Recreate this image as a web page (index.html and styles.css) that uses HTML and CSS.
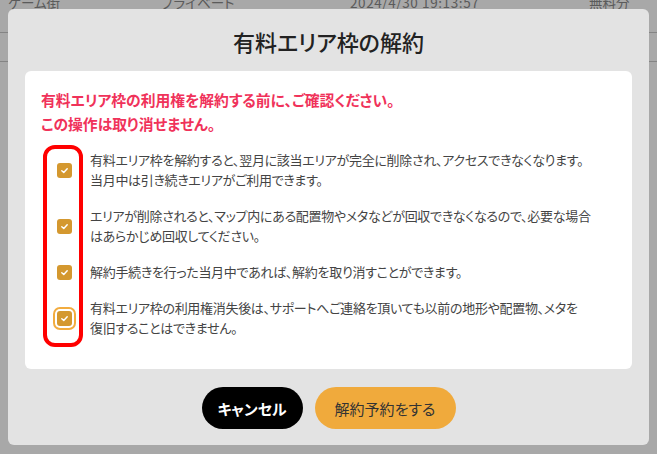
FILE: index.html
```html
<!DOCTYPE html>
<html lang="ja">
<head>
  <meta charset="UTF-8" />
  <meta name="viewport" content="width=device-width, initial-scale=1.0" />
  <title>有料エリア枠の解約</title>
  <link rel="stylesheet" href="styles.css">
</head>
<body>
  <table class="area-table">
    <tr>
      <td class="col-name">ゲーム街</td>
      <td class="col-type">プライベート</td>
      <td class="col-date">2024/4/30 19:13:57</td>
      <td class="col-plan">無料分</td>
    </tr>
    <tr>
      <td class="col-name"></td>
      <td class="col-type"></td>
      <td class="col-date"></td>
      <td class="col-plan"></td>
    </tr>
  </table>

  <div class="overlay">
    <div class="modal">
      <h2 class="modal-title">有料エリア枠の解約</h2>

      <div class="card">
        <p class="warning">有料エリア枠の利用権を解約する前に、ご確認ください。<br>この操作は取り消せません。</p>

        <ul class="checklist">
          <li>
            <span class="check">
              <svg viewBox="0 0 10 10" width="9" height="9"><path d="M2 5.2 L4.2 7.2 L8 3" /></svg>
            </span>
            <span class="check-text">有料エリア枠を解約すると、翌月に該当エリアが完全に削除され、アクセスできなくなります。<br>当月中は引き続きエリアがご利用できます。</span>
          </li>
          <li>
            <span class="check">
              <svg viewBox="0 0 10 10" width="9" height="9"><path d="M2 5.2 L4.2 7.2 L8 3" /></svg>
            </span>
            <span class="check-text">エリアが削除されると、マップ内にある配置物やメタなどが回収できなくなるので、必要な場合<br>はあらかじめ回収してください。</span>
          </li>
          <li>
            <span class="check">
              <svg viewBox="0 0 10 10" width="9" height="9"><path d="M2 5.2 L4.2 7.2 L8 3" /></svg>
            </span>
            <span class="check-text">解約手続きを行った当月中であれば、解約を取り消すことができます。</span>
          </li>
          <li>
            <span class="check focused">
              <svg viewBox="0 0 10 10" width="9" height="9"><path d="M2 5.2 L4.2 7.2 L8 3" /></svg>
            </span>
            <span class="check-text">有料エリア枠の利用権消失後は、サポートへご連絡を頂いても以前の地形や配置物、メタを<br>復旧することはできません。</span>
          </li>
        </ul>

        <div class="highlight"></div>
      </div>

      <div class="actions">
        <button class="btn btn-cancel">キャンセル</button>
        <button class="btn btn-primary">解約予約をする</button>
      </div>
    </div>
  </div>
</body>
</html>
```

FILE: styles.css
```css
body {
  margin: 0;
  background: #fff;
  font-family: "Noto Sans CJK JP", "Noto Sans", sans-serif;
  font-feature-settings: "palt";
  color: #333;
}

/* table behind the dialog */
.area-table {
  width: 657px;
  margin-top: -15px;
  border-collapse: collapse;
  table-layout: fixed;
  font-size: 13.5px;
  color: #8a8a8a;
}
.area-table td {
  box-sizing: border-box;
  padding: 8px 0 20px 8px;
  line-height: 19px;
  border-bottom: 1px solid #c8c8c8;
  white-space: nowrap;
  overflow: hidden;
}
.col-name { width: 153px; padding-left: 0; }
.col-type { width: 189px; }
.col-date { width: 239px; letter-spacing: 0.6px; }

/* dialog */
.overlay {
  position: fixed;
  inset: 0;
  background: rgba(0, 0, 0, 0.34);
  display: flex;
  align-items: center;
  justify-content: center;
}
.modal {
  width: 641px;
  box-sizing: border-box;
  padding: 16px 17px 16px;
  background: #e3e3e3;
  border-radius: 6px;
}
.modal-title {
  margin: 0 0 14px;
  font-size: 22px;
  line-height: 32px;
  font-weight: 500;
  text-align: center;
  color: #222;
}

.card {
  position: relative;
  background: #fff;
  border-radius: 6px;
  padding: 17px 16px 31px;
}
.warning {
  margin: 0 0 14px;
  font-size: 14.8px;
  line-height: 24px;
  font-weight: bold;
  color: #f0325a;
}

.checklist {
  list-style: none;
  margin: 0;
  padding: 0;
}
.checklist li {
  display: flex;
  align-items: center;
  margin-bottom: 16px;
}
.checklist li:last-child {
  margin-bottom: 0;
}
.check {
  flex: none;
  width: 15px;
  height: 15px;
  margin-left: 16px;
  margin-right: 18px;
  border-radius: 3px;
  background: #d4982f;
  display: flex;
  align-items: center;
  justify-content: center;
}
.check path {
  fill: none;
  stroke: #fff;
  stroke-width: 1.6;
  stroke-linecap: round;
  stroke-linejoin: round;
}
.check.focused {
  box-shadow: 0 0 0 2px #fff, 0 0 0 4px #f2ac3f;
}
.check-text {
  max-width: 525px;
  font-size: 13px;
  line-height: 20px;
  letter-spacing: -0.3px;
  color: #444;
}

/* red annotation frame over the checkboxes */
.highlight {
  position: absolute;
  left: 18px;
  top: 74px;
  width: 40px;
  height: 202px;
  box-sizing: border-box;
  border: 4px solid #f00;
  border-radius: 12px;
}

.actions {
  display: flex;
  justify-content: center;
  gap: 12px;
  margin-top: 18px;
}
.btn {
  height: 42px;
  border: none;
  border-radius: 21px;
  font-family: inherit;
  font-size: 15px;
  font-feature-settings: "palt";
  cursor: pointer;
}
.btn-cancel {
  width: 101px;
  background: #000;
  color: #fff;
  font-weight: bold;
}
.btn-primary {
  width: 141px;
  background: #f0aa3c;
  color: #333;
}
```
